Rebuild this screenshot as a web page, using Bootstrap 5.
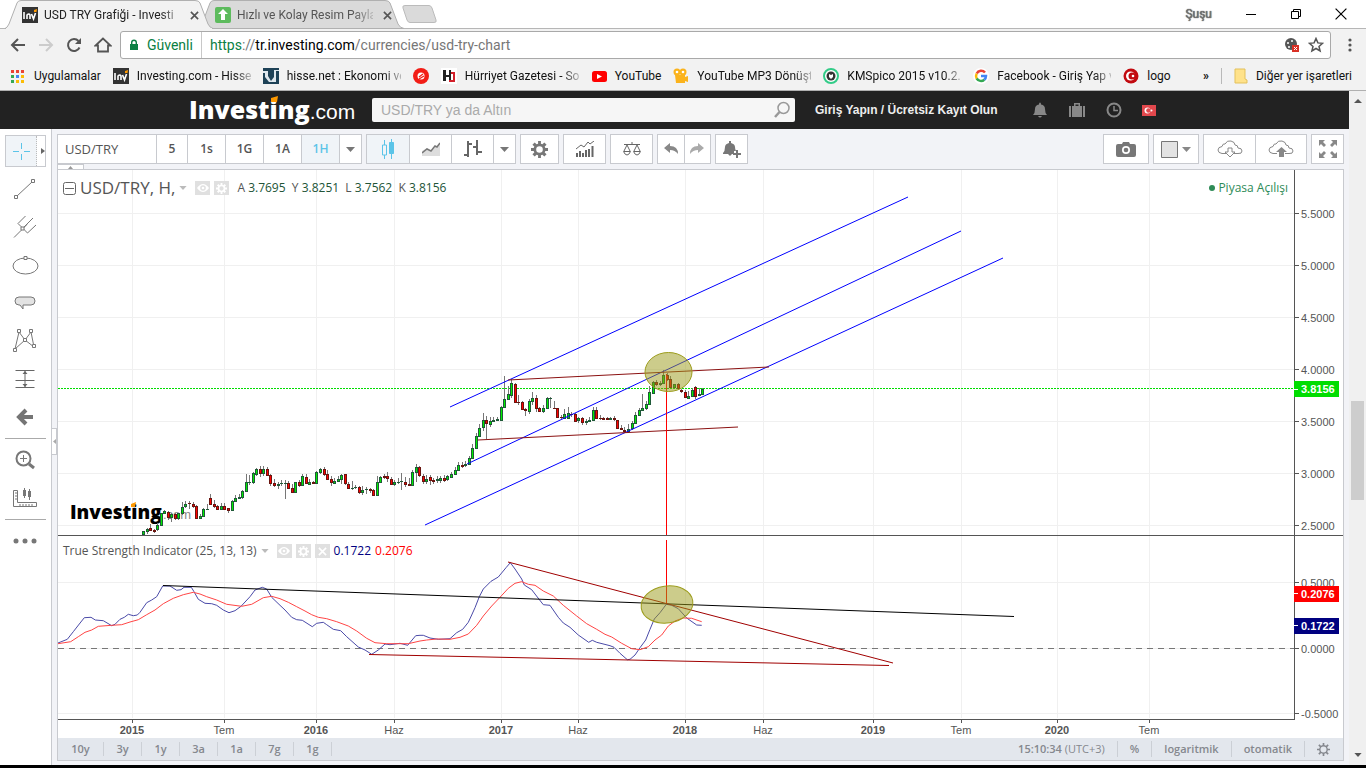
<!DOCTYPE html>
<html lang="tr">
<head>
<meta charset="utf-8">
<meta name="viewport" content="width=device-width, initial-scale=1">
<title>USD TRY Grafiği - Investing.com</title>
<link rel="stylesheet" href="https://cdn.jsdelivr.net/npm/bootstrap@5.3.0/dist/css/bootstrap.min.css">
<style>
:root{--ui:Roboto,"Open Sans",sans-serif;--arial:"Liberation Sans",Arial,sans-serif;--chart:"Open Sans","Noto Sans",sans-serif;--line:#c8cacf}
body{font-family:var(--ui);font-size:12px;line-height:16px;color:#222;background:#f2f3f7}
svg{display:block;flex:none}
button{font:inherit;color:inherit;background:none;border:0;padding:0}
a{color:inherit;text-decoration:none}
.tabstrip{height:29px;background:#fff;border-bottom:1px solid #b6b6b6;padding-left:5px}
.tab-item{position:relative;width:208px;height:29px;padding:1px 14px 0 17px;margin-right:-15px;z-index:2;gap:6px}
.tab-item.idle{z-index:1;color:#555}
.tab-shape{position:absolute;left:0;top:0;z-index:-1}
.fade-label{white-space:nowrap;width:114px;-webkit-mask-image:linear-gradient(90deg,#000 85%,rgba(0,0,0,.25));mask-image:linear-gradient(90deg,#000 85%,rgba(0,0,0,.25))}
.tab-item .fade-label{width:136px}
.new-tab{margin-left:11px}
.win-ctl{gap:33px;padding-right:19px}
.user-name{font-size:12px;color:#777;text-shadow:0 0 1px #000}
.navrow{height:32px;background:#f2f2f2;padding:0 13px 0 10px}
.omnibox{height:28px;background:#fff;border:1px solid #a9a9a9;border-radius:3px;padding:0 6px 0 8px;font-size:14px}
.omnibox input{border:0;outline:0;background:none;position:absolute;inset:0;width:100%;color:transparent}
.secure{color:#0b8043}
.url-text{position:relative;color:#777;white-space:nowrap}
.bookmarks{height:30px;background:#f2f2f2;border-bottom:1px solid #b0b0b0;padding:0 14px 0 10px;color:#111}
.bookmarks a{white-space:nowrap}
.site-head{height:38px;background:#222;padding-left:189px}
.brand-text{width:183px;font:800 25px/36px var(--chart);color:#fff;position:relative}
.brand-text span{font-family:var(--arial);font-weight:400;font-size:21px}
.brand-text svg{position:absolute;left:81px;top:5px}
.site-search{width:423px;height:24px;background:#f6f6f6;border-radius:2px}
.site-search input{border:0;background:none;outline:0;font:14px/24px var(--arial);padding:0 9px;min-width:0}
.site-search input::placeholder{color:#aaa;opacity:1}
.login{font:bold 12px/16px var(--arial);color:#eee;margin-left:20px;width:217px;white-space:nowrap}
.scrollbar-col{width:17px;background:#f0f0f0}
.scroll-thumb{width:13px;height:99px;background:#cdcdcd;margin:298px auto 0 2px}
.tools{width:52px;background:#fff;border-right:1px solid var(--line);padding:6px 5px 0}
.tools button{height:38px;width:40px;display:flex;align-items:center;justify-content:center}
.tools .cross{height:32px;width:41px;border:1px solid var(--line);margin-bottom:3px;justify-content:flex-start}
.cross-main{width:31px;height:30px;background:#f0f4f8;border-right:1px dotted #bbb;display:flex;align-items:center;justify-content:center}
.tools hr{margin:2px 0;border-color:#aaa;opacity:1;border-top-width:1px}
.chart-col{padding:0 5px;min-width:0;position:relative}
.handle{position:absolute;left:-1px;top:299px;width:6px;height:27px;background:#fff;border:1px solid var(--line)}
.chart-tools{height:40px;padding-top:5px;gap:4px;position:relative;padding-right:0}
.tool-group{height:30px;border:1px solid var(--line);background:#fff;display:flex}
.tool-group button{display:flex;align-items:center;justify-content:center;border-left:1px solid var(--line);font:600 12px/16px var(--chart);color:#555}
.tool-group button:first-child{border-left:0}
.w20{width:22px}.w26{width:26px}.w30{width:31px}.w37{width:37px}.w38{width:38px}.w41{width:41px}.w42{width:42px}.w44{width:44px}.w50{width:51px}
.tool-group .on{background:#f0f4f8;color:#5bc4e8}
.tool-group .pair{width:98px;justify-content:flex-start;padding-left:7px;font-size:13px;font-weight:500}
.collapse-tab{position:absolute;left:0;top:35px;width:27px;height:6px;background:#fff;border:1px solid var(--line);border-bottom:0}
.frame{border:1px solid var(--line);background:#fff;position:relative}
.plot{width:100%;height:auto}
.plot text{font:11px var(--arial);fill:#555}
.plot .yr{font-weight:bold}
.plot .tag{font-weight:bold;fill:#fff}
.plot .wm{font:800 19px var(--chart);fill:#000}
.plot .wmc{font:13px var(--arial);fill:#888}
.legend-row{position:absolute;left:5px;top:8px;font:12px/20px var(--chart);color:#555}
.legend-row .name{font-size:17px}
.legend-row .v{color:#225437}
.legend-row .tsi{color:#000080}
.legend-row .sig{color:#f00}
.legend-two{top:371px}
.legend-row i{width:15px;height:14px;background:#e0e0e0;color:#fff;display:flex;align-items:center;justify-content:center}
.market{position:absolute;right:55px;top:8px;font:12px/20px var(--chart);color:#2e8b57}
.market::before{content:"";display:inline-block;width:6px;height:6px;border-radius:50%;background:#2e8b57;margin-right:3px;vertical-align:1px}
.range-bar{height:22px;background:#e3e7ed;font:600 11px/16px var(--chart);color:#85888e;padding-right:13px}
.range-bar button{border-right:1px solid #ccd0d6;height:14px;line-height:14px;width:38px}
.range-bar button:first-child{width:46px}
.range-bar button:last-child{border:0}
.taskbar{height:3px;background:#000}
</style>
</head>
<body class="d-flex flex-column min-vh-100">
<svg width="0" height="0" class="position-absolute" aria-hidden="true">
  <symbol id="inv" viewBox="0 0 16 16"><rect width="16" height="16" fill="#333"/><path d="M2 5v7M5 12V8q2-2 3 0v4M9.500 7l2 5 2-6" fill="none" stroke="#fff" stroke-width="1.600"/><path d="M12 3l3-1-.5 3H12z" fill="#f90"/></symbol>
  <symbol id="gear" viewBox="0 0 18 18"><path fill="currentColor" fill-rule="evenodd" d="M7.500 0h3v2.800l1.600.7 2-2 2.400 2.400-2 2 .7 1.600H18v3h-2.800l-.7 1.600 2 2-2.400 2.400-2-2-1.600.7V18h-3v-2.800l-1.600-.7-2 2-2.400-2.400 2-2-.7-1.600H0v-3h2.800l.7-1.600-2-2 2.400-2.400 2 2 1.600-.7zM9 5.500a3.500 3.500 0 1 0 0 7 3.500 3.500 0 0 0 0-7z"/></symbol>
  <symbol id="gear-line" viewBox="0 0 14 14"><circle cx="7" cy="7" r="4" fill="none" stroke="currentColor" stroke-width="1.500"/><path d="M7 0v3M7 11v3M0 7h3M11 7h3M2 2l2.200 2.200M9.800 9.800L12 12M12 2L9.800 4.200M4.200 9.800L2 12" stroke="currentColor" stroke-width="1.800"/></symbol>
  <symbol id="eye" viewBox="0 0 12 10"><path d="M0 5q6-8 12 0-6 8-12 0z" fill="#fff"/><circle cx="6" cy="5" r="2.800" fill="#e0e0e0"/><circle cx="6" cy="5" r="1.300" fill="#fff"/></symbol>
  <symbol id="down" viewBox="0 0 9 5"><path d="M0 0h9L4.500 5z" fill="currentColor"/></symbol>
  <symbol id="x" viewBox="0 0 10 10"><path d="M1 1l8 8M9 1L1 9" stroke="currentColor" stroke-width="1.800"/></symbol>
</svg>

<header>
  <div class="tabstrip d-flex">
    <div class="tab-item d-flex align-items-center">
      <svg class="tab-shape" width="208" height="29"><path d="M0 28.500Q2 28 4 24L12 3Q13 .5 16 .5H190Q194 .5 195 3L203 24Q205 28 208 28.500z" fill="#f2f2f2" stroke="#b0b0b0"/><path d="M1 28.500H207" stroke="#f2f2f2"/></svg>
      <svg width="16" height="16"><use href="#inv"/></svg><span class="fade-label">USD TRY Grafiği - Investi</span>
      <button class="ms-auto" aria-label="Sekmeyi kapat"><svg width="9" height="9" color="#555"><use href="#x"/></svg></button>
    </div>
    <div class="tab-item idle d-flex align-items-center">
      <svg class="tab-shape" width="208" height="29"><path d="M0 28.500Q2 28 4 24L12 3Q13 .5 16 .5H187Q191 .5 192 3L200 24Q202 28 206 28.500z" fill="#dadada" stroke="#b0b0b0"/></svg>
      <svg width="16" height="16"><rect width="16" height="16" rx="2" fill="#5dbb5d"/><path d="M8 2l5 5h-3v6H6V7H3z" fill="#fff"/></svg><span class="fade-label">Hızlı ve Kolay Resim Payla</span>
      <button class="ms-auto" aria-label="Sekmeyi kapat"><svg width="9" height="9"><use href="#x"/></svg></button>
    </div>
    <button class="new-tab" aria-label="Yeni sekme"><svg width="36" height="18"><path d="M1 3Q0 .5 3 .5H27Q29 .5 30 3L34 15Q35 17.500 32 17.500H8Q6 17.500 5 15z" fill="#dadada" stroke="#bbb"/></svg></button>
    <div class="ms-auto d-flex align-items-center win-ctl">
      <span class="user-name">Şuşu</span>
      <button aria-label="Simge durumuna küçült"><svg width="12" height="12"><path d="M1 6.500h10" stroke="#000"/></svg></button>
      <button aria-label="Önceki boyut"><svg width="12" height="12" fill="none" stroke="#000"><path d="M1.500 3.500h7v7h-7zM3.500 3v-1.500h7v7H9"/></svg></button>
      <button aria-label="Kapat"><svg width="12" height="12" viewBox="0 0 10 10"><path d="M.5.5l9 9M9.500.5l-9 9" stroke="#000"/></svg></button>
    </div>
  </div>
  <div class="navrow d-flex align-items-center">
    <div class="d-flex gap-2 me-2">
      <button class="me-1" aria-label="Geri"><svg width="16" height="16" fill="none" stroke="#555" stroke-width="2"><path d="M15 8H2M8 2L2 8l6 6"/></svg></button>
      <button class="me-1" aria-label="İleri"><svg width="16" height="16" fill="none" stroke="#ccc" stroke-width="2"><path d="M1 8h13M8 2l6 6-6 6"/></svg></button>
      <button class="me-1" aria-label="Yenile"><svg width="16" height="16"><path d="M13.500 10.500A6 6 0 1 1 12.500 4" fill="none" stroke="#555" stroke-width="2"/><path d="M15 1v6H9z" fill="#555"/></svg></button>
      <button aria-label="Ana sayfa"><svg width="18" height="16"><path d="M9 1.500L1.500 8.500H4v6h10v-6h2.500z" fill="none" stroke="#555" stroke-width="1.800"/></svg></button>
    </div>
    <div class="omnibox flex-grow-1 d-flex align-items-center">
      <svg width="10" height="12"><path d="M1 5h8v6H1z" fill="#0b8043"/><path d="M2.700 5V3.500a2.300 2.300 0 0 1 4.600 0V5" fill="none" stroke="#0b8043" stroke-width="1.400"/></svg>
      <span class="secure ms-2">Güvenli</span><span class="vr mx-2"></span>
      <div class="url-text flex-grow-1"><input type="text" aria-label="Adres çubuğu"><span class="secure">https</span>://<span class="text-black">tr.investing.com</span>/currencies/usd-try-chart</div>
      <svg width="16" height="16"><circle cx="7" cy="7" r="6" fill="#555"/><circle cx="4" cy="6" r="1" fill="#fff"/><circle cx="8" cy="4" r="1" fill="#fff"/><circle cx="5" cy="10" r="1" fill="#fff"/><path d="M8 8h7v7H8z" fill="#d93025"/><path d="M10 10l3 3M13 10l-3 3" stroke="#fff"/></svg>
      <svg class="ms-2" width="16" height="16"><path d="M8 1.500l1.900 4.400 4.700.4-3.600 3.100 1.100 4.600L8 11.500 3.900 14 5 9.400 1.400 6.300l4.700-.4z" fill="none" stroke="#555" stroke-width="1.500"/></svg>
    </div>
    <button class="ms-3" aria-label="Menü"><svg width="6" height="16" fill="#555"><circle cx="3" cy="3" r="1.600"/><circle cx="3" cy="8" r="1.600"/><circle cx="3" cy="13" r="1.600"/></svg></button>
  </div>
  <nav class="bookmarks d-flex align-items-center" aria-label="Yer işaretleri">
    <a href="#" class="d-flex me-2 pe-1"><svg width="16" height="16" class="me-2"><g fill="#ea4335"><path d="M1 2h3v3H1z"/><path d="M6 2h3v3H6z"/><path d="M11 2h3v3h-3z"/></g><path d="M1 7h3v3H1zM1 12h3v3H1z" fill="#34a853"/><path d="M6 7h3v3H6z" fill="#4285f4"/><path d="M11 7h3v3h-3zM6 12h3v3H6zM11 12h3v3h-3z" fill="#fbbc05"/></svg>Uygulamalar</a>
    <a href="#" class="d-flex me-2 pe-1"><svg width="16" height="16" class="me-2"><use href="#inv"/></svg><span class="fade-label">Investing.com - Hisse</span></a>
    <a href="#" class="d-flex me-2 pe-1"><svg width="16" height="16" class="me-2"><rect width="16" height="16" fill="#1e4257"/><path d="M0 3h5v5l3 5 3-4V2h5v1h-3v11H6L2 9V5H0z" fill="#dfe8ee"/></svg><span class="fade-label">hisse.net : Ekonomi ve</span></a>
    <a href="#" class="me-2 pe-1" aria-label="Yer işareti"><svg width="16" height="16"><circle cx="8" cy="8" r="8" fill="#f21d16"/><circle cx="8" cy="8" r="3.500" fill="#fff"/><path d="M6 9l4-3M6 11l5-3" stroke="#f21d16" stroke-width="1.300"/></svg></a>
    <a href="#" class="d-flex me-2 pe-1"><svg width="16" height="16" class="me-2"><rect width="16" height="16" fill="#fff"/><path d="M2 2h3v5h3V2h2v11H8V9H5v4H2z" fill="#222"/><path d="M10 4h4v10H8v-2h4V6h-2z" fill="#d2202a"/></svg><span class="fade-label">Hürriyet Gazetesi - So</span></a>
    <a href="#" class="d-flex me-2 pe-1"><svg width="16" height="16" class="me-2"><rect y="3" x="1" width="15" height="11" rx="2.500" fill="#f00"/><path d="M6 6l5 2.500L6 11z" fill="#fff"/></svg>YouTube</a>
    <a href="#" class="d-flex me-2 pe-1"><svg width="16" height="16" class="me-2" fill="#fbb31c"><circle cx="4" cy="4" r="3.500"/><circle cx="10" cy="4" r="3.500"/><path d="M2 7h10v2l3-1v6l-3-1v2H3z"/><circle cx="4" cy="4" r="1.300" fill="#fff"/><circle cx="10" cy="4" r="1.300" fill="#fff"/></svg><span class="fade-label">YouTube MP3 Dönüşt</span></a>
    <a href="#" class="d-flex me-2 pe-1"><svg width="16" height="16" class="me-2"><circle cx="8" cy="8" r="7" fill="#fff" stroke="#3c8" stroke-width="2"/><circle cx="8" cy="8" r="4.500" fill="#333"/><path d="M6 6l2 1 2-1v3l-2 2-2-2z" fill="#fff"/></svg><span class="fade-label">KMSpico 2015 v10.2.0</span></a>
    <a href="#" class="d-flex me-2 pe-1"><svg width="16" height="16" class="me-2" fill="none" stroke-width="2.500"><circle cx="8" cy="8" r="8" fill="#fff"/><path d="M12 4.500A5 5 0 0 0 3.700 5.500" stroke="#ea4335"/><path d="M3.700 5.500a5 5 0 0 0 0 5" stroke="#fbbc05"/><path d="M3.700 10.500a5 5 0 0 0 7.600 1.200" stroke="#34a853"/><path d="M11.300 11.700A5 5 0 0 0 13 8H8" stroke="#4285f4"/></svg><span class="fade-label">Facebook - Giriş Yap v</span></a>
    <a href="#" class="d-flex"><svg width="16" height="16" class="me-2"><circle cx="8" cy="8" r="7.500" fill="#c20a10"/><circle cx="7.500" cy="8" r="4.500" fill="#fff"/><circle cx="9" cy="8" r="3.500" fill="#c20a10"/><circle cx="10" cy="8" r="1.300" fill="#fff"/></svg>logo</a>
    <div class="ms-auto d-flex">
      <button class="fw-bold me-2 pe-1" aria-label="Diğer">»</button><span class="vr me-2"></span>
      <a href="#" class="d-flex ms-1"><svg width="14" height="16" class="me-2"><path d="M1 1h10v10l2 1v3H1z" fill="#ffe28a" stroke="#e3c15c"/></svg>Diğer yer işaretleri</a>
    </div>
  </nav>
</header>

<div class="d-flex flex-grow-1">
  <div class="flex-grow-1 d-flex flex-column min-w-0">
    <div class="site-head d-flex align-items-center">
      <a href="#" class="brand-text">Investing<span>.com</span><svg width="8" height="6"><path d="M1 2l7-2-1 6H1z" fill="#f90"/></svg></a>
      <form class="site-search d-flex align-items-center"><input class="flex-grow-1" type="search" aria-label="Ara" placeholder="USD/TRY ya da Altın"><button type="button" class="me-1" aria-label="Ara"><svg width="18" height="18"><circle cx="10.500" cy="7" r="5.500" fill="none" stroke="#999" stroke-width="1.500"/><path d="M6.500 11L2 16" stroke="#999" stroke-width="2.500"/></svg></button></form>
      <a href="#" class="login">Giriş Yapın / Ücretsiz Kayıt Olun</a>
      <div class="d-flex align-items-center gap-3">
        <svg class="me-1" width="16" height="16"><path d="M1 13q2-2 2-6 0-4 4-4.500 0-2 1-2t1 2Q13 3 13 7q0 4 2 6zM6 14h4q-2 3-4 0z" fill="#888"/></svg>
        <svg class="me-1" width="18" height="16"><path d="M1 4h2v11H1zM4 4h10v11H4zM15 4h2v11h-2zM6 4V1h6v3h-1.500V2.500h-3V4z" fill="#888"/></svg>
        <svg class="me-1" width="16" height="16" fill="none" stroke="#888" stroke-width="2"><circle cx="8" cy="8" r="6.500"/><path d="M8 4v4.500h4" stroke-width="1.500"/></svg>
        <svg width="14" height="11"><rect width="14" height="11" fill="#e2484d"/><circle cx="5.500" cy="5.500" r="3" fill="#fff"/><circle cx="6.500" cy="5.500" r="2.300" fill="#e2484d"/><circle cx="9.500" cy="5.500" r="1" fill="#fff"/></svg>
      </div>
    </div>
    <div class="d-flex flex-grow-1">
      <aside class="tools" aria-label="Çizim araçları">
        <button class="cross" aria-label="İmleç"><span class="cross-main"><svg width="17" height="17" stroke="#5bc4e8"><path d="M8.500 0v6M8.500 11v6M0 8.500h6M11 8.500h6"/></svg></span><svg class="ms-1" width="4" height="6"><path d="M0 0l4 3-4 3z" fill="#666"/></svg></button>
        <button aria-label="Trend çizgisi"><svg width="22" height="22" fill="none" stroke="#777"><path d="M3 18L18 4M.5 17.500h3v3h-3zM17.500 1.500h3v3h-3z"/></svg></button>
        <button aria-label="Çatal"><svg width="24" height="24" fill="none" stroke="#777"><path d="M1 22.500L14 9.500M5 8.500l9.500 9.500M5 8.500L12.500 1M9.500 13.500L20 3M14.500 18L23 10"/><path d="M8 12h3v3H8z" fill="#fff"/></svg></button>
        <button aria-label="Elips"><svg width="27" height="20" fill="#fff" stroke="#777"><ellipse cx="13.500" cy="11" rx="12.500" ry="8"/><path d="M12 1.500h3v3h-3z"/></svg></button>
        <button aria-label="Balon"><svg width="22" height="14"><path d="M5 1h12q4 0 4 4t-4 4H9v4L6 9H5Q1 9 1 5t4-4z" fill="#e3e3e3" stroke="#777"/></svg></button>
        <button aria-label="Desen"><svg width="24" height="24" fill="#fff" stroke="#777"><path d="M2 20L6 3l6 8 6-8 3 15-9-7z" fill="none"/><path d="M.5 19.500h3v3h-3zM4.500.5h3v3h-3zM10.500 9.500h3v3h-3zM16.500.5h3v3h-3zM19.500 15.500h3v3h-3z"/></svg></button>
        <button aria-label="Fiyat aralığı"><svg width="20" height="20" stroke="#666"><path d="M.5 1.500h19M.5 11.500h19M.5 18.500h19M10 2v16"/><path d="M7.500 5L10 2l2.500 3zM7.500 15l2.500 3 2.500-3z" fill="#666" stroke="none"/></svg></button>
        <button aria-label="Ok"><svg width="18" height="18" fill="none" stroke="#757575" stroke-width="4"><path d="M17 9H4M10 2L3 9l7 7"/></svg></button>
        <hr>
        <button aria-label="Yakınlaştır"><svg width="20" height="20" fill="none" stroke="#777" stroke-width="2"><circle cx="8.500" cy="8.500" r="7"/><path d="M14 14l5 4" stroke-width="3"/><path d="M8.500 5v7M5 8.500h7" stroke-width="1"/></svg></button>
        <button aria-label="Ölç"><svg width="24" height="20" fill="none" stroke="#777"><path d="M.5 2.500h4v12h19v4H.5zM2 5h2M2 8h2M2 11h2M7 16v2M10 16v2M13 16v2M16 16v2M19 16v2"/><path d="M11.500 0v10M16.500 1v11"/><path d="M10 2h3v6h-3zM15 3h3v6h-3z" fill="#777" stroke="none"/></svg></button>
        <hr>
        <button aria-label="Daha fazla"><svg width="24" height="6" fill="#777"><circle cx="3" cy="3" r="2.500"/><circle cx="12" cy="3" r="2.500"/><circle cx="21" cy="3" r="2.500"/></svg></button>
      </aside>
      <main class="chart-col flex-grow-1">
        <div class="handle"><svg width="4" height="25"><path d="M4 10v5l-3-2.500z" fill="#aaa"/></svg></div>
        <div class="chart-tools d-flex">
          <div class="tool-group"><button class="pair">USD/TRY</button><button class="w30">5</button><button class="w38">1s</button><button class="w38">1G</button><button class="w38">1A</button><button class="w38 on">1H</button><button class="w20" aria-label="Aralık"><svg width="9" height="5" color="#777"><use href="#down"/></svg></button></div>
          <div class="tool-group"><button class="w42 on" aria-label="Mumlar"><svg width="14" height="20" stroke="#5bc4e8" fill="none"><path d="M3.500 1v5M3.500 16v4M1.500 6h4v10h-4zM10.500 0v20"/><path d="M8.500 3.500h4v11h-4z" fill="#5bc4e8"/></svg></button><button class="w42" aria-label="Alan"><svg width="18" height="14"><path d="M0 9l5-3 4 3 9-8v13H0z" fill="#ddd"/><path d="M0 11l5-4 4 2 4-5 2 1 3-4" fill="none" stroke="#777" stroke-width="1.500"/></svg></button><button class="w42" aria-label="Çubuk"><svg width="18" height="18" fill="none" stroke="#666" stroke-width="2"><path d="M4 1v16M0 15h4M4 4h4M13 0v15M9 7h4M13 12h5"/></svg></button><button class="w20" aria-label="Stil"><svg width="9" height="5" color="#777"><use href="#down"/></svg></button></div>
          <div class="tool-group"><button class="w37" aria-label="Ayarlar"><svg width="17" height="17" color="#777"><use href="#gear"/></svg></button></div>
          <div class="tool-group"><button class="w41" aria-label="Göstergeler"><svg width="18" height="16" fill="none" stroke="#666"><path d="M0 8l5-4 3 2 4-5 2 2 4-3"/><path d="M1 16v-4M4 16v-6M7 16v-4M10 16V9M13 16V8M16.500 16V5" stroke-width="2"/></svg></button></div>
          <div class="tool-group"><button class="w41" aria-label="Karşılaştır"><svg width="18" height="14" fill="none" stroke="#666"><path d="M1 2.500h16M9 0v2M4 3L1 9M4 3l3 6M14 3l-3 6M14 3l3 6M.5 9.500h7Q6 13 4 13T.5 9.500zM10.500 9.500h7Q16 13 14 13t-3.500-3.500z"/></svg></button></div>
          <div class="tool-group"><button class="w26" aria-label="Geri al"><svg width="15" height="12"><path d="M0 5l6-5v3q8 0 8 8-3-4-8-4v3z" fill="#888"/></svg></button><button class="w26" aria-label="Yinele"><svg width="15" height="12"><path d="M14 5L8 0v3Q0 3 0 11q3-4 8-4v3z" fill="#aaa"/></svg></button></div>
          <div class="tool-group"><button class="w30" aria-label="Alarm"><svg width="18" height="17"><path d="M0 12q2-2 2-6 0-3 4-4V0h2v2q4 1 4 4 0 2 1 4h-2v3H0zM5 13h4l-2 2z" fill="#777"/><path d="M14 9v8M10 13h8" stroke="#777" stroke-width="2"/></svg></button></div>
          <div class="d-flex gap-1 ms-auto">
            <div class="tool-group"><button class="w44" aria-label="Ekran görüntüsü"><svg width="20" height="16"><path d="M2 3h4l1-2h6l1 2h4q2 0 2 2v9q0 2-2 2H2q-2 0-2-2V5q0-2 2-2z" fill="#777"/><circle cx="10" cy="9" r="4" fill="#fff"/><circle cx="10" cy="9" r="2.300" fill="#777"/></svg></button></div>
            <div class="tool-group"><button class="w44 gap-1" aria-label="Renk"><svg width="17" height="17"><path d="M.5.5h16v16H.5z" fill="#e3e3e3" stroke="#777"/></svg><svg width="9" height="5" color="#888"><use href="#down"/></svg></button></div>
            <div class="tool-group"><button class="w50" aria-label="Yükle"><svg width="26" height="18"><path d="M9 13.500H5Q1 13 1 10t4-3.500Q6 3 8 4q2-4 6-3 4 1 4 4 3 0 3 3 4 0 4 3t-4 2.500h-4" fill="none" stroke="#888"/><path d="M11 8h4v4h3l-5 5-5-5h3z" fill="#fff" stroke="#888"/></svg></button><button class="w50" aria-label="Kaydet"><svg width="26" height="18"><path d="M9 13.500H5Q1 13 1 10t4-3.500Q6 3 8 4q2-4 6-3 4 1 4 4 3 0 3 3 4 0 4 3t-4 2.500h-4" fill="none" stroke="#888"/><path d="M11 17h5v-5h3l-5.500-5L8 12h3z" fill="#888"/></svg></button></div>
            <div class="tool-group"><button class="w30" aria-label="Tam ekran"><svg width="18" height="18" fill="#888"><path id="ar" d="M0 0h6L4 2l3 3-2 2-3-3-2 2z"/><use href="#ar" transform="matrix(-1 0 0 1 18 0)"/><use href="#ar" transform="matrix(1 0 0 -1 0 18)"/><use href="#ar" transform="matrix(-1 0 0 -1 18 18)"/></svg></button></div>
          </div>
          <button class="collapse-tab" aria-label="Daralt"><svg class="mx-auto" width="5" height="3"><path d="M0 3h5L2.500 0z" fill="#999"/></svg></button>
        </div>
        <div class="frame">
          <svg class="plot" viewBox="58 170 1285 568" role="img" aria-label="USD/TRY haftalık grafik">
            <g stroke="#f0f0f0" id="grid"></g>
            <text class="wm" x="70" y="519">Investing</text><text class="wmc" x="163" y="519">.com</text><path d="M131 504l5-2-1 5h-4z" fill="#f90"/>
            <path d="M58 388.500H1294" stroke="#0d0" stroke-dasharray="2 1" shape-rendering="crispEdges"/>
            <g id="candles" shape-rendering="crispEdges"></g>
            <g stroke="#00f" stroke-width="1"><path d="M450 407L908 197M467 464L961 231M425 525L1003 258"/></g>
            <path d="M508 380L769 367M478 440L738 427" stroke="#8b1111"/>
            <path d="M666.500 374V535M666.500 540V603" stroke="#f00"/>
            <path d="M58 648.500H1294" stroke="#777" stroke-dasharray="6 5"/>
            <g fill="none" id="tsi" stroke-linejoin="round"></g>
            <path d="M163 585.500L1014 616.500" stroke="#000"/>
            <path d="M508 562L893 663M369 654.500L889 665.500" stroke="#a00000"/>
            <g fill="#999917" fill-opacity=".5" stroke="#9c9c1c"><ellipse cx="668.500" cy="372" rx="23.500" ry="19.500"/><ellipse cx="667" cy="604.500" rx="26" ry="18.500" transform="rotate(-8 667 604.500)"/></g>
            <path d="M58 535.500H1343M1294.500 170V719M58 719.500H1295" stroke="#555"/>
            <g id="axis"></g>
            <g><path d="M1294 381h45v16h-45z" fill="#0d0"/><path d="M1294 586h45v16h-45z" fill="#f00"/><path d="M1294 618h45v16h-45z" fill="#000080"/><path d="M1294 389.500h4M1294 593.500h4M1294 625.500h4" stroke="#fff"/><text class="tag" x="1301" y="393">3.8156</text><text class="tag" x="1301" y="598">0.2076</text><text class="tag" x="1301" y="630">0.1722</text></g>
          </svg>
          <div class="legend-row d-flex align-items-center">
            <svg width="13" height="13"><rect x=".5" y=".5" width="12" height="12" rx="2" fill="#fff" stroke="#666"/><path d="M2 6.500h9" stroke="#666"/></svg>
            <span class="name ms-1 me-1">USD/TRY, H,</span><svg class="me-2" width="8" height="4" color="#bbb"><use href="#down"/></svg>
            <i><svg width="12" height="10"><use href="#eye"/></svg></i><i class="mx-1"><svg width="11" height="11"><use href="#gear"/></svg></i>
            <span class="ms-1">A <span class="v">3.7695</span>&nbsp; Y <span class="v">3.8251</span>&nbsp; L <span class="v">3.7562</span>&nbsp; K <span class="v">3.8156</span></span>
          </div>
          <div class="market">Piyasa Açılışı</div>
          <div class="legend-row legend-two d-flex align-items-center">
            <span>True Strength Indicator (25, 13, 13)</span><svg class="ms-1 me-2" width="8" height="4" color="#bbb"><use href="#down"/></svg>
            <i><svg width="12" height="10"><use href="#eye"/></svg></i><i class="mx-1"><svg width="11" height="11"><use href="#gear"/></svg></i><i><svg width="9" height="9"><use href="#x"/></svg></i>
            <span class="ms-1 tsi">0.1722</span><span class="ms-1 sig">0.2076</span>
          </div>
          <div class="range-bar d-flex align-items-center">
            <button>10y</button><button>3y</button><button>1y</button><button>3a</button><button>1a</button><button>7g</button><button>1g</button>
            <div class="ms-auto d-flex align-items-center gap-2">
              <span class="me-1">15:10:34 <span class="fw-normal">(UTC+3)</span></span><span class="vr"></span><span class="mx-1">%</span><span class="vr"></span><span class="mx-1">logaritmik</span><span class="vr"></span><span class="mx-1">otomatik</span><span class="vr"></span>
              <svg class="ms-1" width="13" height="13"><use href="#gear-line"/></svg>
            </div>
          </div>
        </div>
      </main>
    </div>
  </div>
  <div class="scrollbar-col d-flex flex-column"><svg class="mx-auto mt-2" width="8" height="4"><path d="M0 4h8L4 0z" fill="#555"/></svg><div class="scroll-thumb"></div><svg class="mx-auto mt-auto mb-2" width="8" height="4" color="#555"><use href="#down"/></svg></div>
</div>
<div class="taskbar"></div>

<script src="https://cdn.jsdelivr.net/npm/bootstrap@5.3.0/dist/js/bootstrap.bundle.min.js"></script>
<script>
// One weekly candle per entry: direction, body top, body bottom, wick top, wick bottom
const weeks = `G531,535,531,535 G529,532,528,534 R528,531,524,531 R530,532,529,533 G525,530,523,531 G513,526,513,526 G511,514,510,514 R512,518,511,520 G514,518,513,522 R514,519,513,520 G513,519,513,520 G507,514,502,515 G504,507,501,508 R503,504,501,509 R504,507,502,508 R506,519,505,519 G516,519,514,519 G509,517,508,517 G509,510,504,510 R498,505,494,505 R504,507,500,508 R506,510,505,510 G506,510,503,510 R506,510,503,510 R508,511,508,513 G501,511,500,511 G498,502,495,502 G497,499,494,499 G491,498,490,499 G482,492,474,492 G482,483,475,485 G473,483,472,484 G469,475,468,476 R469,474,466,477 G469,474,466,476 R469,476,467,476 R475,484,474,486 R483,486,479,487 G484,486,482,489 G483,484,480,486 G483,484,480,499 R483,489,481,489 R488,493,484,493 G482,493,482,493 R482,486,480,487 G476,486,474,486 R477,484,474,484 G482,485,479,485 R482,484,481,484 G472,484,471,484 G469,473,468,474 R469,475,467,476 R474,480,470,480 R479,483,476,486 G481,484,478,484 G479,482,476,482 G475,480,474,484 R474,484,474,485 R484,489,482,489 G488,489,481,490 G487,488,485,489 R487,493,486,494 G490,493,486,495 G489,490,487,494 R489,491,488,493 R490,496,489,496 G482,496,476,496 G477,483,476,483 R476,478,474,479 R476,479,472,482 R479,485,477,485 G482,485,480,486 G482,483,478,484 G481,482,473,490 R482,485,477,487 R484,486,478,486 G472,486,470,486 G467,473,464,482 R467,476,466,477 R476,482,474,484 G479,482,475,484 R477,481,475,485 R480,482,478,484 G479,481,476,483 G478,481,476,483 R478,481,475,482 G476,480,475,481 G474,478,472,478 G470,475,467,475 G465,471,462,471 R465,467,462,468 G464,466,461,467 G458,465,456,465 G448,459,444,459 G436,449,433,449 G428,437,424,437 G420,428,413,431 R420,424,416,439 G421,425,417,427 G420,422,417,422 G419,421,417,421 G407,421,406,421 G399,408,376,408 G394,400,386,400 G383,396,379,398 R384,403,383,403 R402,403,395,405 R402,410,401,410 R409,411,408,416 G401,412,399,414 G398,402,392,405 R398,409,395,412 R408,412,407,412 G408,412,405,413 G398,409,397,409 G398,399,397,408 R408,409,401,409 R408,418,408,418 R417,418,415,419 G414,419,409,419 G413,419,407,419 R414,415,412,417 R414,422,413,422 G418,421,417,423 R418,423,417,425 G421,423,419,425 G420,422,417,422 G410,421,407,421 R410,419,407,419 R418,419,415,420 R418,420,417,420 R418,420,417,420 G418,420,417,420 R418,420,416,421 R420,429,420,429 R428,430,425,430 R430,432,427,433 G429,432,424,433 G423,429,421,430 G415,424,412,424 G410,416,408,416 G408,411,394,411 G404,409,401,410 G392,405,386,405 G382,394,381,394 R382,385,380,386 G383,385,381,386 G375,384,370,384 R375,380,373,381 R379,388,376,388 G384,388,384,388 R384,389,383,390 R390,392,389,393 R392,398,390,398 G396,399,391,399 G390,397,388,397 R387,397,386,399 G394,396,388,396 G389,395,388,395`.split(' ');
const r = (x, y, w, h, f) => `<rect x="${x}" y="${y}" width="${w}" height="${h}" fill="${f}"/>`;
document.getElementById('candles').innerHTML = weeks.map((s, i) => {
  const up = s[0] === 'G', [t, b, hi, lo] = s.slice(1).split(',').map(Number), x = Math.round(142 + 3.54 * i);
  return r(x + 1, hi, 1, lo - hi, '#777') + r(x, t, 3, b - t, up ? '#1f5a38' : '#6a1510') + (b - t > 2 ? r(x + 1, t + 1, 1, b - t - 2, up ? '#0e0' : '#f00') : '');
}).join('');
// Indicator curves, two stretches each
const lines = [
 ['#4a4aa8', '24,459 52,448 70,425 88,402 103,383 123,382 136,390 160,392 185,407 195,403 210,388 223,382 235,373 250,377 262,375 270,367 290,338 305,330 320,320 338,288 360,288 380,301 393,299 402,292 424,292 432,305 445,328 465,340 485,341 500,346 520,360 537,368 555,362 573,349 600,320 615,300 637,292 650,297 665,322 690,346 705,360 725,382 740,389 757,391 787,410 800,400 820,397 830,404 850,418 872,422 890,440 925,471 945,480 965,493 985,480 1005,462 1020,464 1050,460 1073,466 1097,437 1110,436',
  '0,301 10,301 30,309 55,313 90,311 110,293 128,283 145,262 155,240 165,218 178,185 190,162 213,139 235,126 258,98 271,83 285,102 305,132 313,150 335,164 352,186 370,209 390,211 415,247 430,264 450,277 475,300 506,322 517,316 530,322 570,332 582,337 600,355 622,374 630,373 645,360 660,338 677,315 690,283 703,252 720,233 739,208 755,211 775,221 800,249 830,270 845,271'],
 ['#ff4545', '24,461 62,455 85,440 105,427 125,420 145,409 185,406 215,404 240,396 265,389 290,374 315,360 340,341 370,325 400,314 430,307 450,312 470,320 500,330 530,343 575,349 605,343 640,323 665,319 690,326 715,337 740,350 765,363 785,374 805,382 830,386 860,395 895,408 920,423 950,445 975,458 1010,461 1075,461 1110,453',
  '0,318 20,315 50,312 90,313 120,307 145,297 170,271 190,243 215,213 240,187 265,160 285,145 305,140 325,148 345,151 370,168 400,183 430,211 470,243 500,266 530,283 555,298 575,306 605,325 635,341 660,344 685,335 705,315 725,300 745,273 765,258 790,249 815,250 845,260']];
const shift = (p, dx, dy) => p.split(' ').map(q => { const [x, y] = q.split(',').map(Number); return (dx + x / 3).toFixed(1) + ',' + (dy + y / 3).toFixed(1); }).join(' ');
document.getElementById('tsi').innerHTML = lines.map(([c, a, b]) => `<polyline stroke="${c}" points="${shift(a, 50, 490)} ${shift(b, 420, 535)}"/>`).join('');
// Grid and axis labels
const times = [[132, '2015'], [224, 'Tem'], [316, '2016'], [394, 'Haz'], [501, '2017'], [578, 'Haz'], [685, '2018'], [763, 'Haz'], [873, '2019'], [961, 'Tem'], [1057, '2020'], [1149, 'Tem']];
const prices = [[213, '5.5000'], [265, '5.0000'], [317, '4.5000'], [369, '4.0000'], [421, '3.5000'], [473, '3.0000'], [525, '2.5000'], [582, '0.5000'], [648, '0.0000'], [713, '-0.5000']];
document.getElementById('grid').innerHTML = times.map(([x]) => `<path d="M${x}.5 170V718"/>`).join('') + prices.map(([y]) => `<path d="M58 ${y}.5H1294"/>`).join('');
document.getElementById('axis').innerHTML = times.map(([x, t]) => `<path d="M${x}.5 719v4" stroke="#555"/><text x="${x}" y="734" text-anchor="middle"${t[0] === '2' ? ' class="yr"' : ''}>${t}</text>`).join('') + prices.map(([y, t]) => `<path d="M1295 ${y}.5h4" stroke="#555"/><text x="1301" y="${y + 5}">${t}</text>`).join('');
</script>
</body>
</html>
